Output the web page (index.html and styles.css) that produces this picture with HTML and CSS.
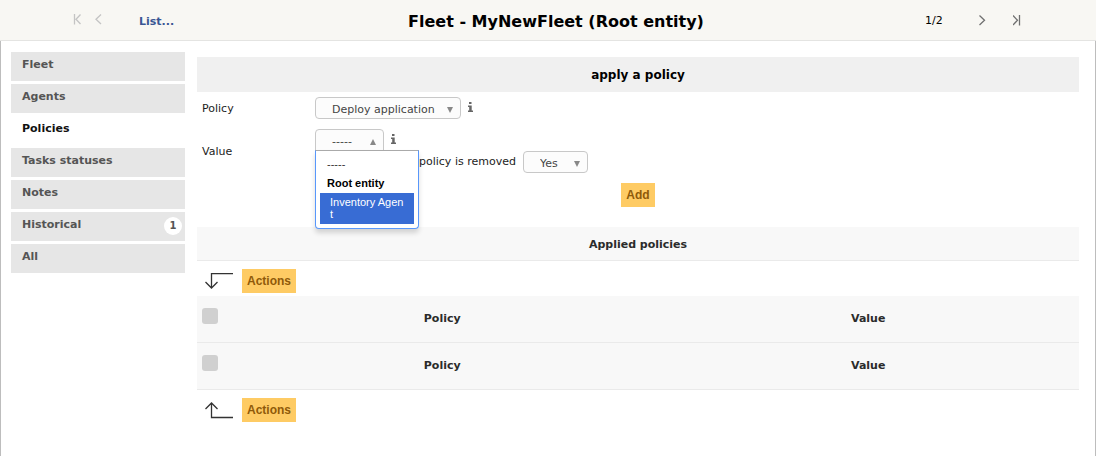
FILE: index.html
```
<!DOCTYPE html>
<html lang="en">
<head>
<meta charset="utf-8">
<title>Fleet - MyNewFleet</title>
<link rel="stylesheet" href="styles.css">
</head>
<body>
<header class="topbar">
  <nav class="pager pager-prev" aria-label="Previous items">
    <a class="pager-link" href="#" aria-label="First"><svg width="8" height="11" viewBox="0 0 8 11"><path d="M1.500 0v10.500M7.500 .5L3 5.300l4.500 4.700"/></svg></a>
    <a class="pager-link" href="#" aria-label="Previous"><svg width="8" height="11" viewBox="0 0 8 11"><path d="M7 .5L2 5.300l5 4.700"/></svg></a>
  </nav>
  <a class="list-link" href="#">List...</a>
  <h1 class="title">Fleet - MyNewFleet (Root entity)</h1>
  <span class="position">1/2</span>
  <nav class="pager pager-next" aria-label="Next items">
    <a class="pager-link" href="#" aria-label="Next"><svg width="8" height="11" viewBox="0 0 8 11"><path d="M.5 .5l5 4.800-5 4.700"/></svg></a>
    <a class="pager-link" href="#" aria-label="Last"><svg width="8" height="11" viewBox="0 0 8 11"><path d="M6.500 0v10.500M0 .5l4.500 4.800L0 10"/></svg></a>
  </nav>
</header>
<main class="page">
  <nav class="tabs" aria-label="Sections">
    <a class="tab" href="#">Fleet</a>
    <a class="tab" href="#">Agents</a>
    <a class="tab tab-active" href="#">Policies</a>
    <a class="tab" href="#">Tasks statuses</a>
    <a class="tab" href="#">Notes</a>
    <a class="tab" href="#">Historical<span class="count">1</span></a>
    <a class="tab" href="#">All</a>
  </nav>
  <section class="content">
    <form class="policy-form">
      <h2 class="band">apply a policy</h2>
      <div class="field">
        <label class="field-label" for="policy">Policy</label>
        <div class="control">
          <span class="picker"><select class="select" id="policy"><option>Deploy application</option></select><svg class="arrow" width="6" height="6" viewBox="0 0 6 6"><path d="M0 0h6L3 6z"/></svg></span>
          <svg class="info" width="5" height="10" viewBox="0 0 5 10"><path d="M1 0h2.500v2H1zM0 3.500h3.700V8.500H5V10H0V8.500h1.200V5H0z"/></svg>
        </div>
      </div>
      <div class="field">
        <label class="field-label" for="value">Value</label>
        <div class="field-stack">
          <div class="control">
            <span class="picker picker-open"><select class="select" id="value"><option>-----</option></select><svg class="arrow" width="6" height="6" viewBox="0 0 6 6"><path d="M0 6h6L3 0z"/></svg>
              <ul class="menu" role="listbox" aria-label="Value">
                <li class="option" role="option">-----</li>
                <li class="group">Root entity</li>
                <li class="option option-current" role="option" aria-selected="true">Inventory Agent</li>
              </ul>
            </span>
            <svg class="info" width="5" height="10" viewBox="0 0 5 10"><path d="M1 0h2.500v2H1zM0 3.500h3.700V8.500H5V10H0V8.500h1.200V5H0z"/></svg>
          </div>
          <div class="control control-removal">
            <label for="removed">policy is removed</label>
            <span class="picker"><select class="select" id="removed"><option>Yes</option></select><svg class="arrow" width="6" height="6" viewBox="0 0 6 6"><path d="M0 0h6L3 6z"/></svg></span>
          </div>
        </div>
      </div>
      <div class="submit-row"><button class="button" type="button">Add</button></div>
    </form>
    <h2 class="band band-light">Applied policies</h2>
    <div class="actions">
      <svg class="hook" width="29" height="17" viewBox="0 0 29 17"><path d="M28 .5h-21.500V15.500M.5 9l6 6 6-6"/></svg>
      <button class="button" type="button">Actions</button>
    </div>
    <table class="grid">
      <thead><tr><th class="check-cell"><input class="check" type="checkbox" aria-label="Select all"></th><th class="policy-col">Policy</th><th>Value</th></tr></thead>
      <tfoot><tr><th class="check-cell"><input class="check" type="checkbox" aria-label="Select all"></th><th class="policy-col">Policy</th><th>Value</th></tr></tfoot>
    </table>
    <div class="actions">
      <svg class="hook" width="29" height="17" viewBox="0 0 29 17"><path d="M28 15.500h-21.500V.5M.5 7l6-6 6 6"/></svg>
      <button class="button" type="button">Actions</button>
    </div>
  </section>
</main>
</body>
</html>
```
FILE: styles.css
```
* { box-sizing: border-box; }
html { height: 100%; }
body {
  margin: 0;
  min-height: 100%;
  display: flex;
  flex-direction: column;
  background: #fff;
  color: #1c1c1c;
  font: 11px/16px Verdana, "DejaVu Sans", sans-serif;
}
a { color: inherit; text-decoration: none; }
svg { display: block; flex: none; }

.topbar {
  display: flex;
  align-items: center;
  height: 41px;
  padding: 0 75px 0 73px;
  background: #f8f7f3;
  border-bottom: 1px solid #e4e4e2;
}
.pager { display: flex; }
.pager svg { fill: none; stroke: currentColor; stroke-width: 1.3; }
.pager-prev { gap: 13px; width: 66px; color: #c4c4c4; padding-bottom: 2px; }
.pager-next { gap: 26px; color: #707070; }
.list-link { width: 84px; padding-top: 3px; color: #3a5693; font-weight: bold; }
.title {
  flex: 1;
  margin: 0;
  padding-top: 3px;
  text-align: center;
  color: #000;
  font-size: 16px;
  line-height: 20px;
}
.position { width: 54px; margin-left: 36px; padding-top: 2px; color: #000; }

.page {
  flex: 1;
  display: flex;
  align-items: flex-start;
  gap: 12px;
  padding: 11px 16px 16px 10px;
  border: solid #bdbdbd;
  border-width: 0 1px;
}
.tabs { display: flex; flex-direction: column; gap: 3px; width: 174px; flex: none; }
.tab {
  display: flex;
  justify-content: space-between;
  height: 29px;
  padding: 5px 3px 0 11px;
  background: #e6e6e6;
  color: #555;
  font-weight: bold;
}
.tab-active { background: none; color: #111; }
.count {
  width: 18px;
  height: 18px;
  border-radius: 50%;
  background: #fff;
  font-size: 10px;
  line-height: 18px;
  text-align: center;
}

.content { flex: 1; min-width: 0; padding-top: 5px; }
.band {
  margin: 0;
  height: 35px;
  background: #f0f0f0;
  color: #000;
  font-size: 12px;
  line-height: 36px;
  text-align: center;
}
.band-light {
  height: 34px;
  background: #f8f8f8;
  border-bottom: 1px solid #eaeaea;
  color: #2b2b2b;
  font-size: 11px;
}
.field { display: flex; align-items: center; padding: 5px 5px; }
.field-label { width: 113px; flex: none; padding-top: 2px; }
.control { display: flex; align-items: flex-start; gap: 7px; }
.control-removal { padding-left: 104px; gap: 7px; }
.control-removal label { padding-top: 3px; }
.picker { position: relative; display: flex; }
.select {
  appearance: none;
  height: 22px;
  min-width: 65px;
  padding: 3px 25px 0 16px;
  border: 1px solid #c8c8c8;
  border-radius: 4px;
  background: #fcfcfc;
  color: #444;
  font: inherit;
}
.picker-open .select { min-width: 69px; border-radius: 4px 4px 0 0; }
.arrow { position: absolute; right: 8px; top: 10px; fill: #888; }
.info { margin-top: 5px; fill: #666; }
.menu {
  position: absolute;
  z-index: 1;
  top: 21px;
  left: 0;
  width: 104px;
  margin: 0;
  padding: 4px;
  list-style: none;
  background: #fff;
  border: 1px solid #5897fb;
  border-top-color: #aaa;
  border-radius: 0 0 4px 4px;
  box-shadow: 0 4px 5px rgba(0, 0, 0, .15);
  color: #333;
  font: 11px/12px "Liberation Sans", Arial, sans-serif;
}
.option, .group { padding: 3px 7px; }
.group { padding: 4px 7px; color: #000; font-weight: bold; }
.option-current {
  padding: 3px 9px 4px 10px;
  background: #386cd4;
  color: #fff;
  word-break: break-all;
}
.submit-row { display: flex; justify-content: center; padding: 5px 0 20px; }
.button {
  height: 24px;
  padding: 0 5px;
  border: 0;
  background: #fecb64;
  color: #8f5a0a;
  font: bold 12px/24px "Liberation Sans", Arial, sans-serif;
}
.actions { display: flex; align-items: center; gap: 8px; padding: 8px 8px 3px; }
.hook { fill: none; stroke: #333; stroke-width: 1.3; }
.grid { width: 100%; border-spacing: 0; table-layout: fixed; }
.grid th {
  height: 47px;
  padding: 0;
  background: #f8f8f8;
  border-bottom: 1px solid #eaeaea;
  color: #2b2b2b;
  text-align: center;
}
.grid .check-cell { width: 30px; padding: 12px 5px; text-align: left; vertical-align: top; }
.grid .policy-col { width: 430px; width: 48.8%; }
.check {
  display: block;
  appearance: none;
  width: 16px;
  height: 16px;
  margin: 0;
  border-radius: 3px;
  background: #d0d0d0;
}
```
